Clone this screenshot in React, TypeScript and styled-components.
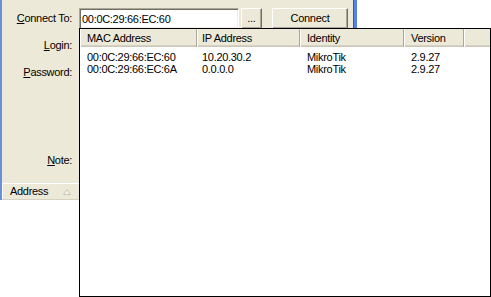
import styled, { createGlobalStyle } from "styled-components";

// column geometry shared by the dropdown header and its rows
interface IColumn {
  title: string;
  width: string;
  pad: number;
}

const columns: IColumn[] = [
  { title: "MAC Address", width: "117px", pad: 6 },
  { title: "IP Address", width: "103px", pad: 4 },
  { title: "Identity", width: "104px", pad: 6 },
  { title: "Version", width: "60px", pad: 6 },
  { title: "", width: "1fr", pad: 0 },
];

const devices = [
  ["00:0C:29:66:EC:60", "10.20.30.2", "MikroTik", "2.9.27", ""],
  ["00:0C:29:66:EC:6A", "0.0.0.0", "MikroTik", "2.9.27", ""],
];

const gridCols = columns.map((c) => c.width).join(" ");

function App() {
  return (
    <>
      <GlobalStyle />
      <Screen>
        <Window>
          <Form>
            <Label>
              <Key>C</Key>onnect To:
            </Label>
            <FieldRow>
              <TextBox defaultValue="00:0C:29:66:EC:60" />
              <Button width={21} gap={2}>
                ...
              </Button>
              <Button width={76} gap={10}>
                Connect
              </Button>
            </FieldRow>
            <Label>
              <Key>L</Key>ogin:
            </Label>
            <FieldRow>
              <TextBox defaultValue="admin" />
            </FieldRow>
            <Label>
              <Key>P</Key>assword:
            </Label>
            <FieldRow>
              <TextBox type="password" defaultValue="" />
            </FieldRow>
            <Spacer />
            <Spacer />
            <Label>
              <Key>N</Key>ote:
            </Label>
            <FieldRow>
              <TextBox defaultValue="" />
            </FieldRow>
          </Form>
          <ListHeader>
            <ListHeadCell>
              Address
              <SortArrow width="8" height="6" viewBox="0 0 8 6">
                <polygon points="4,0.5 7.5,5.5 0.5,5.5" fill="#f4f3ee" stroke="#c9c6b6" />
              </SortArrow>
            </ListHeadCell>
          </ListHeader>
        </Window>

        <Dropdown>
          <DropHeader>
            {columns.map((c, i) => (
              <HeadCell key={i} pad={c.pad}>
                {c.title}
              </HeadCell>
            ))}
          </DropHeader>
          <Rows>
            {devices.map((row, r) => (
              <Row key={r}>
                {row.map((cell, i) => (
                  <Cell key={i} pad={columns[i].pad + 1}>
                    {cell}
                  </Cell>
                ))}
              </Row>
            ))}
          </Rows>
        </Dropdown>
      </Screen>
    </>
  );
}

const GlobalStyle = createGlobalStyle`
  html, body {
    margin: 0;
    padding: 0;
    background: #ffffff;
  }
  body {
    font-family: "Liberation Sans", Arial, sans-serif;
    font-size: 11px;
    color: #000;
  }
`;

const Screen = styled.div`
  position: relative;
  width: 491px;
  height: 297px;
  overflow: hidden;
  background: #fff;
  letter-spacing: -0.3px;
`;

const Window = styled.div`
  width: 351px;
  display: flex;
  flex-direction: column;
  background: #ece9d8;
  border-left: 2px solid #6a8fdc;
  border-right: 1px solid #2f5ccd;
  box-shadow: 3px 0 0 #5682e4;
`;

const Form = styled.div`
  display: grid;
  grid-template-columns: 70px 1fr;
  grid-template-rows: 21px 21px 21px 55px 21px;
  column-gap: 7px;
  row-gap: 6px;
  padding-top: 8px;
`;

const Label = styled.div`
  align-self: center;
  text-align: right;
  line-height: 13px;
  white-space: nowrap;
`;

const Key = styled.span`
  text-decoration: underline;
`;

const Spacer = styled.div``;

const FieldRow = styled.div`
  display: flex;
  align-items: stretch;
`;

const TextBox = styled.input`
  box-sizing: border-box;
  width: 160px;
  height: 21px;
  margin: 0;
  padding: 0 0 0 2px;
  border: 1px solid;
  border-color: #aca899 #ffffff #ffffff #aca899;
  box-shadow: inset 1px 1px 0 #716f64, inset -1px -1px 0 #f1efe2;
  background: #fff;
  font-family: inherit;
  font-size: 11px;
  letter-spacing: -0.3px;
  color: #000;
  outline: none;
`;

const Button = styled.button<{ width: number; gap: number }>`
  box-sizing: border-box;
  width: ${(p) => p.width}px;
  height: 21px;
  margin: 0 0 0 ${(p) => p.gap}px;
  padding: 0;
  border: 1px solid;
  border-color: #ffffff #716f64 #716f64 #ffffff;
  box-shadow: inset -1px -1px 0 #aca899;
  background: #ece9d8;
  font-family: inherit;
  font-size: 11px;
  letter-spacing: -0.3px;
  color: #000;
  line-height: 17px;
`;

const ListHeader = styled.div`
  display: flex;
  margin-top: 12px;
  height: 17px;
  box-sizing: border-box;
  border-bottom: 1px solid #d6d2c2;
`;

const ListHeadCell = styled.div`
  position: relative;
  width: 120px;
  box-sizing: border-box;
  padding-left: 7px;
  line-height: 15px;
  border-top: 1px solid #fff;
  border-left: 1px solid #fff;
`;

const SortArrow = styled.svg`
  position: absolute;
  left: 60px;
  top: 5px;
`;

const Dropdown = styled.div`
  position: absolute;
  left: 79px;
  top: 28px;
  width: 412px;
  height: 269px;
  box-sizing: border-box;
  border: 1px solid #000;
  background: #fff;
`;

const DropHeader = styled.div`
  display: grid;
  grid-template-columns: ${gridCols};
  height: 18px;
  background: #ece9d8;
  box-shadow: inset 0 -1px 0 #cbc7b8, inset 0 -2px 0 #d6d2c2;
`;

const HeadCell = styled.div<{ pad: number }>`
  box-sizing: border-box;
  padding-left: ${(p) => p.pad}px;
  padding-top: 1px;
  line-height: 16px;
  white-space: nowrap;
  border-left: 1px solid #fff;
  border-right: 1px solid #aca899;
  &:last-child {
    border-right: none;
  }
`;

const Rows = styled.div`
  padding-top: 4px;
`;

const Row = styled.div`
  display: grid;
  grid-template-columns: ${gridCols};
  height: 12px;
  line-height: 12px;
`;

const Cell = styled.div<{ pad: number }>`
  padding-left: ${(p) => p.pad}px;
  white-space: nowrap;
`;

export default App;
